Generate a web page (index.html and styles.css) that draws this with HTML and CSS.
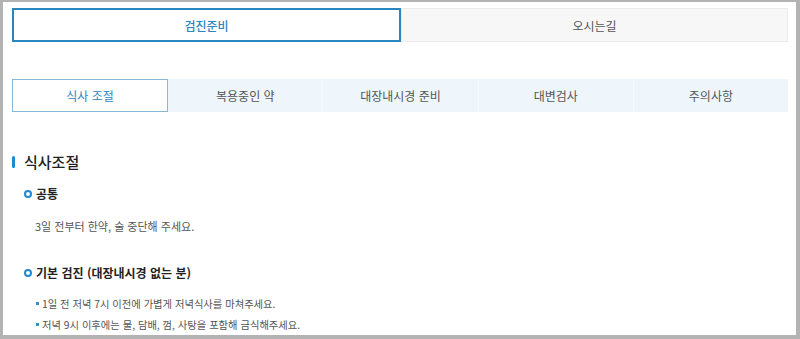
FILE: index.html
```html
<!DOCTYPE html>
<html lang="ko">
<head>
    <meta charset="UTF-8">
    <meta name="viewport" content="width=device-width, initial-scale=1.0">
    <title>검진준비</title>
    <link rel="stylesheet" href="styles.css">
</head>
<body>
    <div class="frame">
        <div class="page">
            <!-- 상단 탭 -->
            <div class="main-tabs">
                <div class="main-tab active">검진준비</div>
                <div class="main-tab">오시는길</div>
            </div>

            <!-- 하위 탭 -->
            <div class="sub-tabs">
                <div class="sub-tab active">식사 조절</div>
                <div class="sub-tab">복용중인 약</div>
                <div class="sub-tab">대장내시경 준비</div>
                <div class="sub-tab">대변검사</div>
                <div class="sub-tab">주의사항</div>
            </div>

            <h2 class="section-title">식사조절</h2>

            <h3 class="sub-title">공통</h3>
            <p class="desc">3일 전부터 한약, 술 중단해 주세요.</p>

            <h3 class="sub-title second">기본 검진 (대장내시경 없는 분)</h3>
            <ul class="dot-list">
                <li>1일 전 저녁 7시 이전에 가볍게 저녁식사를 마쳐주세요.</li>
                <li>저녁 9시 이후에는 물, 담배, 껌, 사탕을 포함해 금식해주세요.</li>
            </ul>
        </div>
    </div>
</body>
</html>
```

FILE: styles.css
```css
html, body {
    margin: 0;
    padding: 0;
}
body {
    font-family: "Noto Sans CJK KR", "Noto Sans", sans-serif;
    background-color: #b3b3b3;
    overflow: hidden;
}
.frame {
    height: 339px;
    box-sizing: border-box;
    padding: 2px 4px 4px 3px;
}
.page {
    height: 100%;
    box-sizing: border-box;
    background-color: #fff;
    padding: 6px 8px 0 9px;
    overflow: hidden;
}
.main-tabs {
    display: flex;
    height: 34px;
}
.main-tab {
    flex: 1;
    display: flex;
    align-items: center;
    justify-content: center;
    font-size: 12px;
    color: #555;
    background-color: #f7f7f7;
    border: 1px solid #ececec;
    box-sizing: border-box;
}
.main-tab.active {
    background-color: #fff;
    border: 2px solid #2a86be;
    color: #2a86be;
    font-weight: 500;
}
.sub-tabs {
    display: flex;
    height: 33px;
    margin-top: 37px;
    background-color: #eef6fc;
}
.sub-tab {
    flex: 1;
    display: flex;
    align-items: center;
    justify-content: center;
    font-size: 12px;
    color: #555;
    border-left: 1px solid #f8fbfe;
    box-sizing: border-box;
}
.sub-tab:first-child {
    border-left: none;
}
.sub-tab.active {
    background-color: #fff;
    border: 1px solid #86b9d6;
    color: #2a86be;
}
.sub-tab.active + .sub-tab {
    border-left: none;
}
.section-title {
    position: relative;
    margin: 39px 0 0 0;
    padding-left: 12px;
    font-size: 15px;
    font-weight: 500;
    color: #222;
    line-height: 22px;
}
.section-title::before {
    content: "";
    position: absolute;
    left: 0;
    top: 5px;
    width: 3px;
    height: 12px;
    border-radius: 2px;
    background-color: #1e88d0;
}
.sub-title {
    position: relative;
    margin: 11px 0 0 12px;
    padding-left: 12px;
    font-size: 12px;
    font-weight: bold;
    color: #222;
    line-height: 20px;
}
.sub-title::before {
    content: "";
    position: absolute;
    left: 0;
    top: 6px;
    width: 4px;
    height: 4px;
    border: 2px solid #1e88d0;
    border-radius: 50%;
}
.sub-title.second {
    margin-top: 29px;
}
.desc {
    margin: 14px 0 0 23px;
    font-size: 11px;
    color: #555;
    line-height: 16px;
}
.dot-list {
    list-style: none;
    margin: 10px 0 0 23px;
    padding: 0;
}
.dot-list li {
    position: relative;
    padding-left: 7px;
    font-size: 10.3px;
    color: #555;
    line-height: 21px;
}
.dot-list li::before {
    content: "";
    position: absolute;
    left: 1px;
    top: 9px;
    width: 3px;
    height: 3px;
    background-color: #3a8fc6;
}
```
